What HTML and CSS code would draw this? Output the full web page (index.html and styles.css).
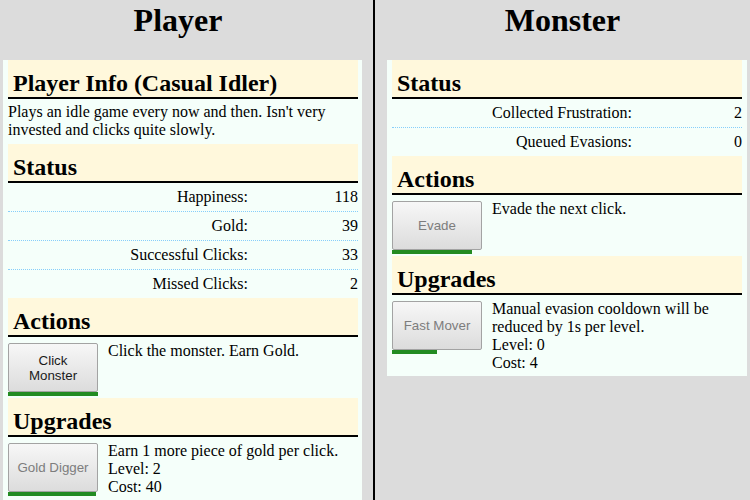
FILE: index.html
```html
<!DOCTYPE html>
<html lang="en">
<head>
<meta charset="utf-8">
<title>Player vs Monster</title>
<link rel="stylesheet" href="styles.css">
</head>
<body>
<div class="page">
  <section class="column column-player">
    <h1 class="column-title">Player</h1>
    <div class="panel">
      <h2 class="section-head">Player Info (Casual Idler)</h2>
      <p class="blurb">Plays an idle game every now and then. Isn't very invested and clicks quite slowly.</p>

      <h2 class="section-head">Status</h2>
      <div class="stats">
        <div class="stat"><span class="stat-label">Happiness:</span><span class="stat-value">118</span></div>
        <div class="stat"><span class="stat-label">Gold:</span><span class="stat-value">39</span></div>
        <div class="stat"><span class="stat-label">Successful Clicks:</span><span class="stat-value">33</span></div>
        <div class="stat"><span class="stat-label">Missed Clicks:</span><span class="stat-value">2</span></div>
      </div>

      <h2 class="section-head">Actions</h2>
      <div class="item">
        <div class="item-control">
          <button class="btn">Click Monster</button>
          <div class="cooldown"><div class="cooldown-fill" style="width:100%"></div></div>
        </div>
        <div class="item-desc">Click the monster. Earn Gold.</div>
      </div>

      <h2 class="section-head">Upgrades</h2>
      <div class="item">
        <div class="item-control">
          <button class="btn btn-disabled">Gold Digger</button>
          <div class="cooldown"><div class="cooldown-fill" style="width:98%"></div></div>
        </div>
        <div class="item-desc">Earn 1 more piece of gold per click.<br>Level: 2<br>Cost: 40</div>
      </div>
    </div>
  </section>

  <section class="column column-monster">
    <h1 class="column-title">Monster</h1>
    <div class="panel">
      <h2 class="section-head">Status</h2>
      <div class="stats">
        <div class="stat"><span class="stat-label">Collected Frustration:</span><span class="stat-value">2</span></div>
        <div class="stat"><span class="stat-label">Queued Evasions:</span><span class="stat-value">0</span></div>
      </div>

      <h2 class="section-head">Actions</h2>
      <div class="item">
        <div class="item-control">
          <button class="btn btn-disabled">Evade</button>
          <div class="cooldown"><div class="cooldown-fill" style="width:89%"></div></div>
        </div>
        <div class="item-desc">Evade the next click.</div>
      </div>

      <h2 class="section-head">Upgrades</h2>
      <div class="item">
        <div class="item-control">
          <button class="btn btn-disabled">Fast Mover</button>
          <div class="cooldown"><div class="cooldown-fill" style="width:50%"></div></div>
        </div>
        <div class="item-desc">Manual evasion cooldown will be reduced by 1s per level.<br>Level: 0<br>Cost: 4</div>
      </div>
    </div>
  </section>
</div>
</body>
</html>
```

FILE: styles.css
```css
html, body {
  margin: 0;
  padding: 0;
}

body {
  background: #dcdcdc;
  color: #000;
  font-family: "Liberation Serif", "Times New Roman", serif;
  font-size: 16px;
  line-height: 18px;
}

.page {
  display: flex;
  min-height: 100vh;
}

.column {
  box-sizing: border-box;
}

.column-player {
  width: 375px;
  border-right: 2px solid #000;
}

.column-monster {
  flex: 1;
}

.column-title {
  margin: 0;
  height: 60px;
  box-sizing: border-box;
  padding-top: 2px;
  font-size: 32px;
  line-height: 37px;
  font-weight: bold;
  text-align: center;
}

.column-player .column-title {
  padding-right: 17px;
}

.panel {
  background: #f5fffa;
  box-sizing: border-box;
  padding: 0 5px 2px;
}

.column-player .panel {
  margin-left: 3px;
  width: 359px;
  padding-right: 4px;
}

.column-monster .panel {
  margin-left: 12px;
  width: 360px;
}

.section-head {
  margin: 0;
  background: #fff8dc;
  padding: 9px 5px 0;
  font-size: 24px;
  line-height: 28px;
  font-weight: bold;
  border-bottom: 2px solid #000;
}

.blurb {
  margin: 4px 0 5px;
}

.stat {
  display: grid;
  grid-template-columns: 240px 1fr;
  padding: 5px 0;
  text-align: right;
  border-bottom: 1px dotted #87cefa;
}

.stat:last-child {
  border-bottom: none;
}

.item {
  display: flex;
  align-items: flex-start;
  gap: 10px;
  margin: 6px 0 2px;
}

.item-control {
  width: 90px;
  flex: none;
}

.btn {
  display: block;
  width: 90px;
  height: 49px;
  margin: 0;
  padding: 0 6px;
  box-sizing: border-box;
  border: 1px solid #a3a3a3;
  border-radius: 2px;
  background: linear-gradient(#f7f7f7, #dcdcdc);
  font-family: "Liberation Sans", Arial, sans-serif;
  font-size: 13.33px;
  line-height: 15px;
  color: #1a1a1a;
}

.btn-disabled {
  color: #7d7d7d;
}

.cooldown {
  height: 4px;
}

.cooldown-fill {
  height: 4px;
  background: #228b22;
}

.item-desc {
  flex: 1;
  margin-top: -1px;
}
```
